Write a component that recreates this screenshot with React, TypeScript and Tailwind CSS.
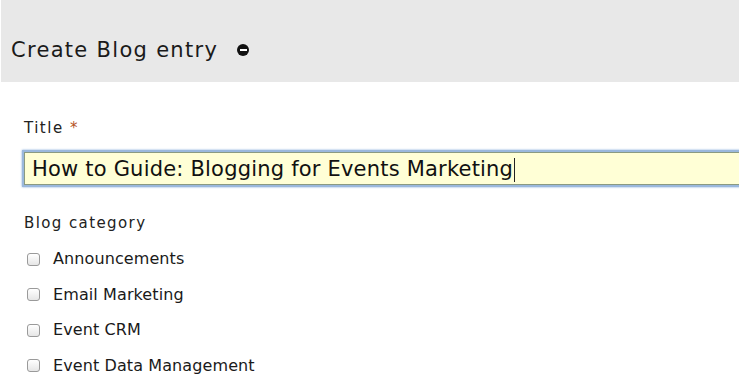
import React from "react";

const categories = ["Announcements", "Email Marketing", "Event CRM", "Event Data Management"];

const App: React.FC = function () {
    return (
        <div className="w-[739px] h-[380px] overflow-hidden bg-white pl-px" style={{fontFamily: "'DejaVu Sans', sans-serif"}}>
            <div className="h-[82px] bg-[#e8e8e8] flex items-end pb-[19px] pl-[10px]">
                <h1 className="text-[21px] leading-[26px] text-[#1a1a1a] tracking-[1.3px]">Create Blog entry</h1>
                <span className="ml-[19px] mb-[7px] w-[12px] h-[12px] rounded-full bg-[#111] flex items-center justify-center">
                    <span className="w-[7px] h-[2px] bg-white" />
                </span>
            </div>
            <div className="pl-[23px] pt-[36px]">
                <label className="block text-[15px] leading-[20px] text-[#222] tracking-[1.5px]">
                    Title <span className="text-[#b5541f]">*</span>
                </label>
                <div className="mt-[12px] -ml-[2px] h-[37px] w-[740px] border-2 border-[#9ab8dc] shadow-[0_0_2px_#7fa7d8]">
                    <div className="h-full border border-[#8a9a82] bg-[#ffffd6] flex items-center pl-[7px] pt-[3px] text-[21px] text-[#111] tracking-[0.2px]">
                        How to Guide: Blogging for Events Marketing
                        <span className="w-px h-[24px] bg-[#222] ml-px" />
                    </div>
                </div>
                <div className="mt-[26px] text-[15px] leading-[20px] text-[#222] tracking-[1.4px]">Blog category</div>
                <ul className="mt-[16px] flex flex-col gap-[15.5px] pl-[3px]">
                    {categories.map((c) => (
                        <li key={c} className="flex items-center h-[20px]">
                            <span className="w-[13px] h-[13px] rounded-[3px] border border-[#9a9a9a] bg-gradient-to-b from-white to-[#e6e6e6]" />
                            <span className="ml-[13px] text-[16px] text-[#1a1a1a] tracking-[0.1px]">{c}</span>
                        </li>
                    ))}
                </ul>
            </div>
        </div>
    );
};

export default App;
